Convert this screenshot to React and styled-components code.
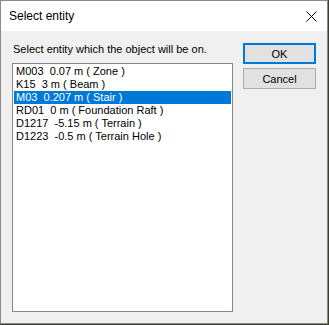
import React from "react";
import styled, { createGlobalStyle } from "styled-components";

const Global = createGlobalStyle`
  html, body { margin: 0; padding: 0; background: #3b3d2c; }
  body { font-family: "Segoe UI", "Liberation Sans", Arial, sans-serif; }
`;

const Window = styled.div`
  box-sizing: border-box;
  width: 328px;
  height: 324px;
  border: 1px solid #8a8a8a;
  background: #f0f0f0;
  display: flex;
  flex-direction: column;
`;

const TitleBar = styled.div`
  height: 30px;
  background: #fff;
  display: flex;
  align-items: center;
  justify-content: space-between;
  padding: 0 10px 0 8px;
  flex-shrink: 0;
`;

const Title = styled.span`
  font-family: "Liberation Sans", Arial, sans-serif;
  font-size: 12px;
  color: #000;
`;

const Close = styled.svg`
  width: 11px;
  height: 11px;
`;

const Body = styled.div`
  flex: 1;
  display: flex;
  padding: 12px 11px 11px 11px;
  gap: 10px;
`;

const Left = styled.div`
  display: flex;
  flex-direction: column;
  width: 223px;
`;

const Label = styled.div`
  font-family: "Liberation Sans", Arial, sans-serif;
  font-size: 11px;
  color: #000;
  height: 13px;
  line-height: 13px;
  margin-bottom: 7px;
  padding-left: 1px;
  white-space: nowrap;
`;

const ListBox = styled.div`
  flex: 1;
  box-sizing: border-box;
  background: #fff;
  border: 1px solid #828790;
  padding: 1px;
`;

const Item = styled.div`
  height: 13px;
  line-height: 13px;
  font-family: "Liberation Sans", Arial, sans-serif;
  font-size: 11px;
  padding-left: 2px;
  white-space: pre;
  color: ${(p) => (p.$selected ? "#fff" : "#000")};
  background: ${(p) => (p.$selected ? "#0078d7" : "transparent")};
`;

const Buttons = styled.div`
  display: flex;
  flex-direction: column;
  gap: 4px;
`;

const Button = styled.button`
  box-sizing: border-box;
  width: 73px;
  height: 21px;
  margin: 0;
  padding: 0;
  background: #e1e1e1;
  border: ${(p) => (p.$default ? "2px solid #0078d7" : "1px solid #adadad")};
  font-family: "Liberation Sans", Arial, sans-serif;
  font-size: 11px;
  color: #000;
`;

const items = [
  "M003  0.07 m ( Zone )",
  "K15  3 m ( Beam )",
  "M03  0.207 m ( Stair )",
  "RD01  0 m ( Foundation Raft )",
  "D1217  -5.15 m ( Terrain )",
  "D1223  -0.5 m ( Terrain Hole )",
];

export default function App() {
  return (
    <>
      <Global />
      <Window>
        <TitleBar>
          <Title>Select entity</Title>
          <Close viewBox="0 0 11 11">
            <path d="M0.5 0.5 L10.5 10.5 M10.5 0.5 L0.5 10.5" stroke="#000" strokeWidth="1" fill="none" />
          </Close>
        </TitleBar>
        <Body>
          <Left>
            <Label>Select entity which the object will be on.</Label>
            <ListBox>
              {items.map((t, i) => (
                <Item key={i} $selected={i === 2}>{t}</Item>
              ))}
            </ListBox>
          </Left>
          <Buttons>
            <Button $default>OK</Button>
            <Button>Cancel</Button>
          </Buttons>
        </Body>
      </Window>
    </>
  );
}
